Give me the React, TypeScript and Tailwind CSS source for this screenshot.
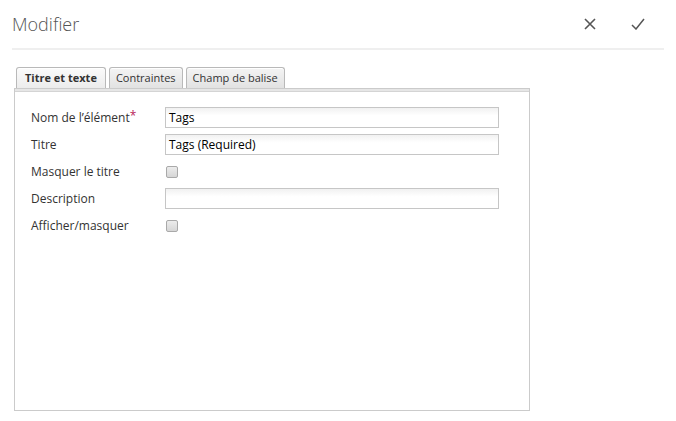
import React from "react";

const font = { fontFamily: '"Open Sans", "Noto Sans", sans-serif' };

function Tab({ label, active }: { label: string; active?: boolean }) {
  return (
    <div
      className={
        "h-[21px] flex items-center border border-b-0 border-[#b9b9b9] rounded-t-[3px] text-[11px] text-[#333] shadow-[inset_0_1px_0_#fff] " +
        (active
          ? "px-[8px] bg-gradient-to-b from-[#fbfbfb] to-[#ececec] font-bold"
          : "px-[6px] bg-gradient-to-b from-[#f4f4f4] to-[#e2e2e2]")
      }
    >
      {label}
    </div>
  );
}

function TextInput({ value }: { value: string }) {
  return (
    <div className="h-[21px] w-[334px] border border-[#c6c6c6] bg-gradient-to-b from-[#f1f1f1] to-white to-40% flex items-center px-[3px] text-[12px] text-black">
      {value}
    </div>
  );
}

function Checkbox() {
  return (
    <div className="w-[12px] h-[12px] ml-px rounded-[2px] border border-[#a9a9a9] bg-gradient-to-b from-[#ececec] to-[#d6d6d6]" />
  );
}

function Row({ label, h, children, star }: { label: string; h: string; children: React.ReactNode; star?: boolean }) {
  return (
    <div className={"flex items-center " + h}>
      <div className="w-[134px] text-[12px] text-[#333]">
        {label}
        {star && <span className="text-[#b8245a] relative -top-[2px]">*</span>}
      </div>
      {children}
    </div>
  );
}

export default function App() {
  return (
    <div className="w-[676px] h-[421px] bg-white flex flex-col" style={font}>
      <header className="mx-[12px] h-[50px] border-b-2 border-[#efefef] flex items-center">
        <h1 className="flex-1 text-[18px] font-light text-[#555]">Modifier</h1>
        <button className="w-[14px] h-[14px] mr-[33px] flex items-center justify-center text-[#555]">
          <svg width="12" height="12" viewBox="0 0 12 12" fill="none" stroke="currentColor" strokeWidth="1.6">
            <path d="M1 1 L11 11 M11 1 L1 11" />
          </svg>
        </button>
        <button className="w-[16px] h-[14px] mr-[18px] flex items-center justify-center text-[#555]">
          <svg width="14" height="12" viewBox="0 0 14 12" fill="none" stroke="currentColor" strokeWidth="1.5">
            <path d="M1 7 L5 11 L13 1" />
          </svg>
        </button>
      </header>

      <div className="ml-[14px] mt-[17px] w-[516px] flex flex-col">
        <div className="flex items-end gap-[3px] pl-[2px]">
          <Tab label="Titre et texte" active />
          <Tab label="Contraintes" />
          <Tab label="Champ de balise" />
        </div>
        <div className="h-[323px] border border-[#cbcbcb] bg-white flex flex-col">
          <div className="h-[3px] bg-[#e6e6e6] border-b border-[#d4d4d4]" />
          <div className="pl-[16px] pt-[15px] flex flex-col">
            <Row label="Nom de l’élément" star h="h-[21px]">
              <TextInput value="Tags" />
            </Row>
            <Row label="Titre" h="h-[21px] mt-[6px]">
              <TextInput value="Tags (Required)" />
            </Row>
            <Row label="Masquer le titre" h="h-[33px]">
              <Checkbox />
            </Row>
            <Row label="Description" h="h-[21px]">
              <TextInput value="" />
            </Row>
            <Row label="Afficher/masquer" h="h-[33px]">
              <Checkbox />
            </Row>
          </div>
        </div>
      </div>
    </div>
  );
}
